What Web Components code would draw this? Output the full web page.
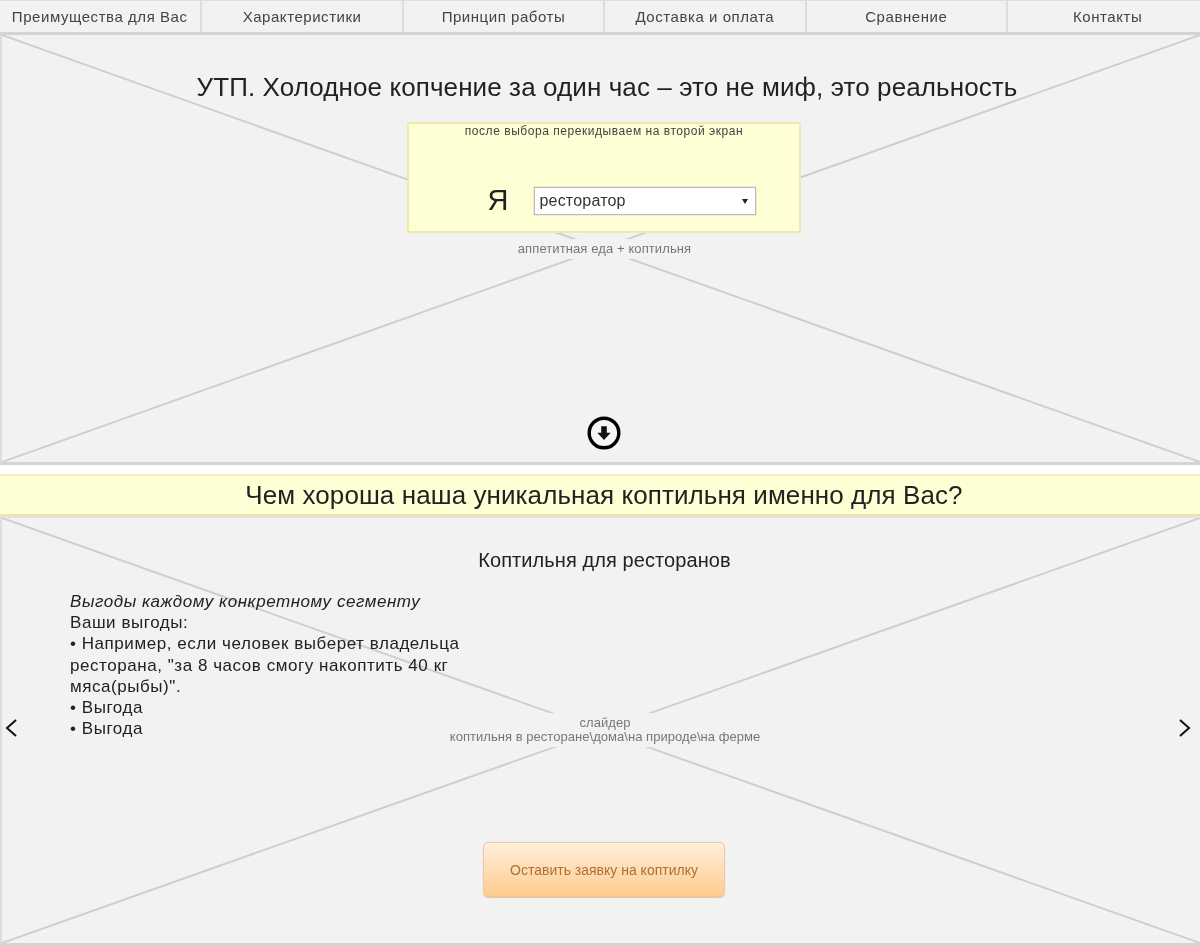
<!DOCTYPE html>
<html lang="ru"><head><meta charset="utf-8"><title>Коптильня</title>
<style>
html,body{margin:0;padding:0;background:#fff}
body{font-family:"Liberation Sans",Arial,sans-serif;color:#222;width:1200px;height:946px;overflow:hidden;filter:blur(.35px)}
</style></head><body>
<template id="t-nav"><style>
:host{display:grid;grid-template-columns:repeat(6,201.4px);width:1208px;margin-left:-1px;height:31px;background:#f2f2f2;border-top:1px solid #ddd;border-bottom:3px solid #d4d4d4;box-sizing:content-box}
</style><slot></slot></template>
<template id="t-item"><style>
:host{display:flex;align-items:center;justify-content:center;font-size:15px;letter-spacing:.55px;color:#444;border-left:2px solid #ddd;white-space:nowrap;box-sizing:border-box}
:host(:first-child){border-left:0}
</style><slot></slot></template>
<template id="t-ph"><style>
:host{display:block;position:relative;background:#f2f2f2;border-left:2px solid #ddd;border-bottom:3px solid #d4d4d4;box-sizing:border-box;overflow:hidden}
svg{position:absolute;inset:0;width:100%;height:100%}
.c{position:relative;height:100%;display:flex;flex-direction:column;align-items:center}
</style><svg viewBox="0 0 100 100" preserveAspectRatio="none"><path d="M0 0L100 100M100 0L0 100" stroke="#cfcfcf" stroke-width="2" vector-effect="non-scaling-stroke" fill="none"/></svg><div class="c"><slot></slot></div></template>
<template id="t-picker"><style>
:host{display:flex;flex-direction:column;align-items:center;box-sizing:border-box;width:394px;height:111px;background:#ffffd6;border:2px solid #ecebab;font-size:12px;letter-spacing:.54px;color:#444}
.row{display:flex;align-items:center;margin-top:49px;margin-left:36px;gap:26px;letter-spacing:0}
.me{font-size:29px;color:#222;line-height:28px;margin-top:-3px}
.sel{position:relative;box-sizing:border-box;width:222px;height:28px;background:#fff;border:1px solid #bbb;box-shadow:0 0 1px #999;font-size:16px;letter-spacing:.2px;color:#333;display:flex;align-items:center;padding-left:4px}
.sel::after{content:"";position:absolute;right:7px;top:11px;border:3.5px solid transparent;border-top:5px solid #222;border-bottom:0}
</style><div><slot></slot></div><div class="row"><span class="me">Я</span><div class="sel">ресторатор</div></div></template>
<template id="t-band"><style>
:host{display:flex;align-items:center;justify-content:center;height:42px;margin-top:9px;padding-left:8px;box-sizing:border-box;background:#ffffd6;border-top:2px solid #f4f0b8;border-bottom:2px solid #ece6a4;font-size:26px;letter-spacing:.08px;color:#222;white-space:nowrap}
</style><slot></slot></template>
<template id="t-benefits"><style>
:host{display:block;grid-area:1/1;justify-self:start;margin-left:68px;width:410px;font-size:17px;letter-spacing:.55px;line-height:21.2px;color:#222}
i{letter-spacing:.63px}
</style><slot></slot></template>
<template id="t-cap"><style>
:host{display:block;grid-area:1/1;justify-self:center;margin:122px 0 0 8px;align-self:start;font-size:13px;letter-spacing:.04px;line-height:14px;color:#777;text-align:center;background:#f2f2f2;padding:3px 4px;white-space:nowrap;height:max-content}
</style><slot></slot></template>
<template id="t-btn"><style>
:host{display:flex;align-items:center;justify-content:center;box-sizing:border-box;width:242px;height:55px;border:1px solid #eec9a0;border-radius:5px;background:linear-gradient(#ffeedd,#ffcb8e);color:#b0702e;font-size:14px;box-shadow:0 1px 1px #e8c39c}
</style><slot></slot></template>
<template id="t-down"><style>
:host{display:block;width:34px;height:34px}svg{display:block}
</style><svg width="34" height="34" viewBox="0 0 34 34"><circle cx="17" cy="17" r="14.8" fill="#f6f6f6" stroke="#000" stroke-width="3.4"/><path d="M14.2 10.2h5.6v6.6h3.9L17 24l-6.7-7.2h3.9z" fill="#111"/></svg></template>
<template id="t-chev"><style>
:host{position:absolute;top:200px;display:block;width:14px;height:20px}
:host([dir=l]){left:2px}:host([dir=r]){right:8px}
svg{display:block}
</style><svg width="14" height="20" viewBox="0 0 14 20"><path id="p" fill="none" stroke="#111" stroke-width="2"/></svg></template>
<script>
const reg=(n,t,init)=>customElements.define(n,class extends HTMLElement{constructor(){super();const s=this.attachShadow({mode:"open"});s.appendChild(document.getElementById(t).content.cloneNode(true));}connectedCallback(){init&&init(this)}});
reg("top-nav","t-nav");reg("nav-item","t-item");reg("ph-box","t-ph");reg("role-picker","t-picker");
reg("promo-band","t-band");reg("benefit-list","t-benefits");reg("slide-caption","t-cap");reg("cta-button","t-btn");reg("down-arrow","t-down");
reg("slide-chevron","t-chev",e=>e.shadowRoot.getElementById("p").setAttribute("d",e.getAttribute("dir")=="l"?"M12 2L3 10l9 8":"M2 2l9 8-9 8"));
</script>
<top-nav><nav-item>Преимущества для Вас</nav-item><nav-item>Характеристики</nav-item><nav-item>Принцип работы</nav-item><nav-item>Доставка и оплата</nav-item><nav-item>Сравнение</nav-item><nav-item>Контакты</nav-item></top-nav>
<ph-box style="height:430px">
<div style="margin:37px 0 0 12px;padding:0 4px;font-size:26px;letter-spacing:.1px;line-height:30px;color:#222;white-space:nowrap">УТП. Холодное копчение за один час – это не миф, это реальность</div>
<role-picker style="margin:20px 0 0 6px">после выбора перекидываем на второй экран</role-picker>
<div style="margin:6px 0 0 7px;font-size:13px;letter-spacing:.1px;line-height:16px;color:#777;background:#f2f2f2;padding:2px 4px">аппетитная еда + коптильня</div>
<down-arrow style="margin:auto 0 12px 6px"></down-arrow>
</ph-box>
<promo-band>Чем хороша наша уникальная коптильня именно для Вас?</promo-band>
<ph-box style="height:430px;border-top:2px solid #e2e2e2">
<div style="margin:28px 0 0 7px;font-size:20px;letter-spacing:.08px;line-height:28px;color:#222;padding:0 4px">Коптильня для ресторанов</div>
<div style="display:grid;width:100%;margin-top:17px;height:192px">
<benefit-list><i>Выгоды каждому конкретному сегменту</i><br>Ваши выгоды:<br>• Например, если человек выберет владельца<br>ресторана, "за 8 часов смогу накоптить 40 кг<br>мяса(рыбы)".<br>• Выгода<br>• Выгода</benefit-list>
<slide-caption>слайдер<br>коптильня в ресторане\дома\на природе\на ферме</slide-caption>
</div>
<cta-button style="margin:59px 0 0 6px">Оставить заявку на коптилку</cta-button>
<slide-chevron dir="l"></slide-chevron><slide-chevron dir="r"></slide-chevron>
</ph-box>
</body></html>
